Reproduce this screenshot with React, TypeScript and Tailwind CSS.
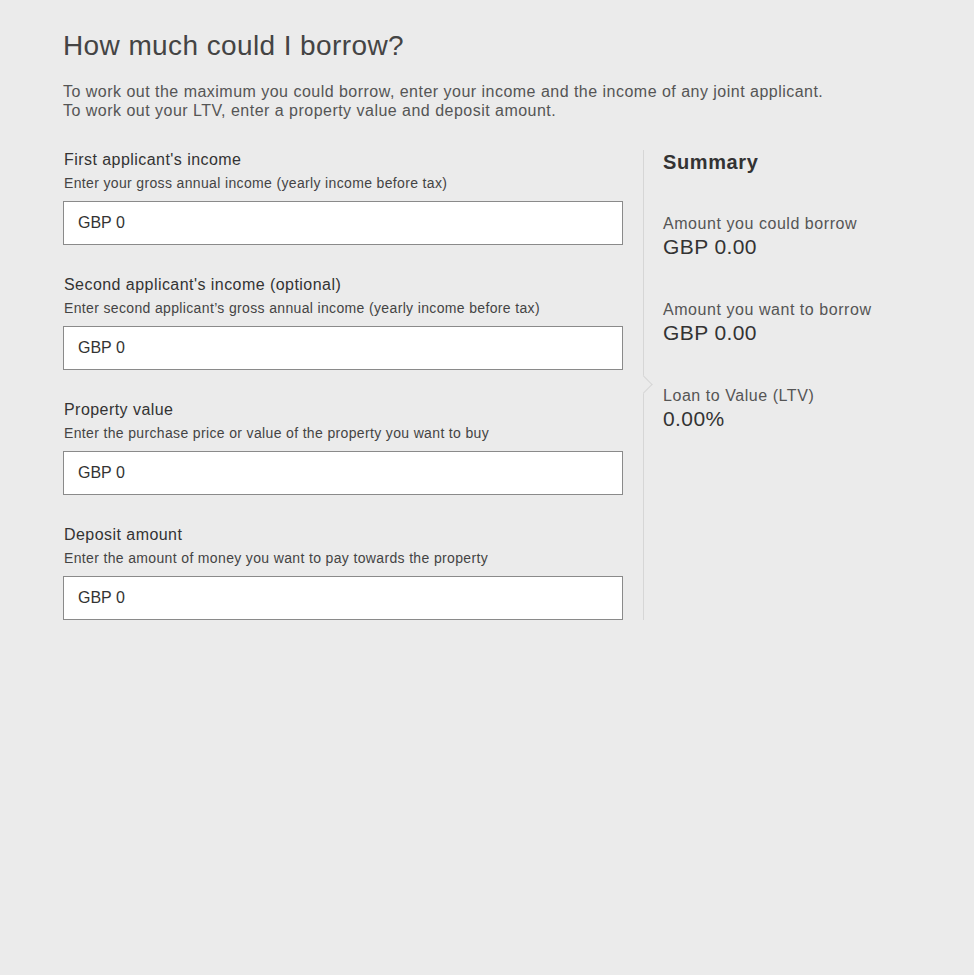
import type { ReactNode } from 'react';

type Field = {
  label: string;
  hint: string;
};

const fields: Field[] = [
  {
    label: "First applicant's income",
    hint: 'Enter your gross annual income (yearly income before tax)',
  },
  {
    label: "Second applicant's income (optional)",
    hint: 'Enter second applicant\u2019s gross annual income (yearly income before tax)',
  },
  {
    label: 'Property value',
    hint: 'Enter the purchase price or value of the property you want to buy',
  },
  {
    label: 'Deposit amount',
    hint: 'Enter the amount of money you want to pay towards the property',
  },
];

const summary = [
  { label: 'Amount you could borrow', value: 'GBP 0.00' },
  { label: 'Amount you want to borrow', value: 'GBP 0.00' },
  { label: 'Loan to Value (LTV)', value: '0.00%' },
];

function InputField({ label, hint }: Field) {
  return (
    <div className="flex flex-col">
      <label className="pl-px text-[16px] leading-[18px] tracking-[0.45px] text-[#333]">{label}</label>
      <p className="mt-[6px] pl-px text-[14px] leading-[16px] tracking-[0.35px] text-[#444]">{hint}</p>
      <div className="mt-[10px] flex h-[44px] items-center border border-[#8a8a8a] bg-white px-[14px] text-[16px] text-[#333]">
        GBP 0
      </div>
    </div>
  );
}

function SummaryItem({ label, value }: { label: string; value: string }): ReactNode {
  return (
    <div className="flex flex-col">
      <span className="text-[16px] leading-[18px] tracking-[0.55px] text-[#555]">{label}</span>
      <span className="mt-[2px] text-[21px] leading-[24px] tracking-[0.4px] text-[#333]">{value}</span>
    </div>
  );
}

export default function App() {
  return (
    <div className="min-h-[975px] w-full bg-[#ebebeb] font-['Liberation_Sans',Arial,sans-serif]">
      <div className="px-[63px] pt-[30px]">
        <h1 className="text-[28px] font-light leading-[32px] tracking-[0.4px] text-[#444]">How much could I borrow?</h1>
        <div className="mt-[20px] text-[16px] leading-[19px] tracking-[0.48px] text-[#555]">
          <p>To work out the maximum you could borrow, enter your income and the income of any joint applicant.</p>
          <p>To work out your LTV, enter a property value and deposit amount.</p>
        </div>

        <div className="mt-[30px] flex">
          <div className="flex w-[560px] flex-col gap-[31px] pt-[1px]">
            {fields.map((f) => (
              <InputField key={f.label} {...f} />
            ))}
          </div>

          <div className="relative ml-[20px] w-px bg-[#d6d6d6]">
            <div className="absolute left-0 top-[228px] h-[13px] w-[13px] -translate-x-[6px] rotate-45 border-r border-t border-[#d6d6d6] bg-[#ebebeb]" />
          </div>

          <div className="ml-[19px] flex flex-col">
            <h2 className="mt-[1px] text-[20px] font-bold leading-[22px] tracking-[0.6px] text-[#333]">Summary</h2>
            <div className="mt-[42px] flex flex-col gap-[42px]">
              {summary.map((s) => (
                <SummaryItem key={s.label} label={s.label} value={s.value} />
              ))}
            </div>
          </div>
        </div>
      </div>
    </div>
  );
}
